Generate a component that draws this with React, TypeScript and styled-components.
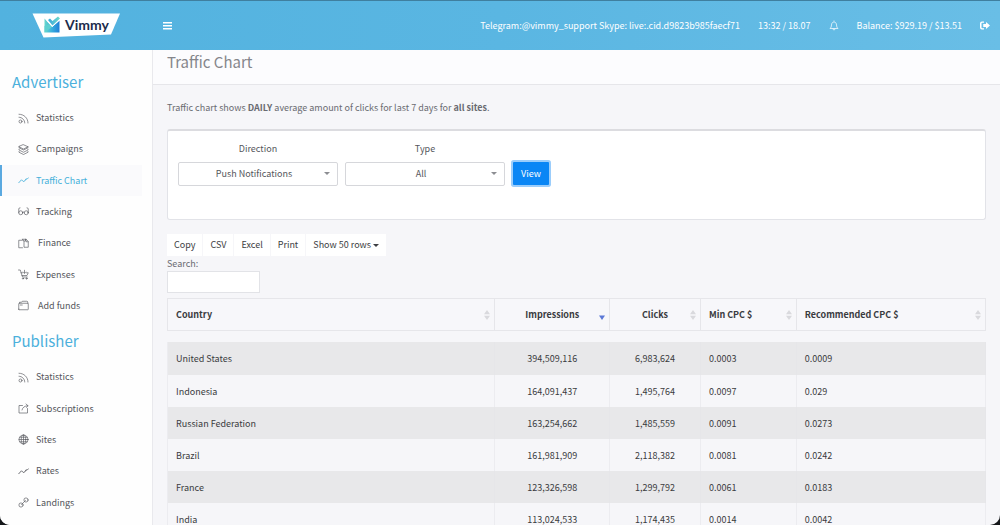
import React from "react";
import styled, { createGlobalStyle, css } from "styled-components";

const GlobalStyle = createGlobalStyle`
  *, *::before, *::after { box-sizing: border-box; }
  html { background: #15171a; }
  body {
    margin: 0;
    font-family: "Noto Sans CJK SC", "Noto Sans", sans-serif;
    font-size: 9px;
    line-height: 14px;
    color: #55565c;
  }
  button, input, select { font: inherit; color: inherit; }
`;

const Shell = styled.div`
  display: flex;
  flex-direction: column;
  height: 100vh;
  overflow: hidden;
  background: #f6f6f9;
  border-radius: 0 0 10px 10px;
`;

const TopBar = styled.header`
  display: flex;
  align-items: center;
  flex: none;
  height: 50px;
  padding: 0 10px 0 32px;
  border-top: 1px solid #3f7f9f;
  background: linear-gradient(90deg, #52b2df, #5ab6e2 50%, #69bee6);
  color: #fff;
`;

const LogoLink = styled.a`
  display: block;
  width: 89px;
  height: 26px;
`;

const IconButton = styled.button`
  display: flex;
  padding: 0;
  border: 0;
  background: none;
  color: #fff;
`;

const MenuButton = styled(IconButton)`
  margin-left: 42px;
`;

const TopInfo = styled.div`
  display: flex;
  align-items: center;
  gap: 18px;
  margin-left: auto;
`;

const Body = styled.div`
  display: flex;
  flex: 1;
  min-height: 0;
`;

const Sidebar = styled.nav`
  flex: none;
  width: 153px;
  padding-top: 20px;
  overflow: hidden;
  background: #fefefe;
  border-right: 1px solid #e9e9ed;
`;

const SectionTitle = styled.h2`
  margin: 0;
  padding-left: 12px;
  font-size: 15px;
  font-weight: 400;
  line-height: 24px;
  color: #4bb0dc;
`;

const MenuList = styled.ul<{ $height: number }>`
  display: grid;
  grid-auto-rows: 1fr;
  height: ${(p) => p.$height}px;
  margin: 8px 0;
  padding: 0;
  list-style: none;
`;

const MenuLink = styled.a<{ $active?: boolean; $wide?: boolean }>`
  display: flex;
  align-items: center;
  gap: ${(p) => (p.$wide ? 9 : 7)}px;
  height: 100%;
  margin-right: 10px;
  padding: 1px 0 0 16px;
  border-left: 2px solid transparent;
  text-decoration: none;
  color: #55565c;
  ${(p) =>
    p.$active &&
    css`
      border-left-color: #5aa9e0;
      background: #fafafc;
      color: #45b0da;
    `}
`;

const Main = styled.main`
  flex: 1;
  min-width: 0;
  overflow: hidden;
`;

const PageHead = styled.div`
  height: 35px;
  padding-left: 14px;
  border-bottom: 1px solid #e6e6ea;
  background: #fcfcfe;
`;

const PageTitle = styled.h1`
  margin: 0;
  font-size: 15px;
  font-weight: 400;
  line-height: 24px;
  color: #85868b;
`;

const Content = styled.div`
  padding: 16px 14px 0;
`;

const Intro = styled.p`
  margin: 0;
  color: #6a6b71;
`;

const FilterCard = styled.form`
  display: flex;
  align-items: flex-start;
  gap: 7px;
  height: 91px;
  margin-top: 14px;
  padding: 11px 10px;
  border: 1px solid #e2e3e8;
  border-top: 2px solid #dcdce0;
  border-radius: 3px;
  background: #fff;
`;

const Field = styled.div`
  width: 160px;
  text-align: center;
`;

const FieldLabel = styled.label`
  display: block;
  margin-bottom: 6px;
`;

const SelectBox = styled.div`
  position: relative;
  &::after {
    content: "";
    position: absolute;
    top: 10px;
    right: 8px;
    border: 3px solid transparent;
    border-top-color: #8c8d92;
    border-bottom: 0;
    pointer-events: none;
  }
`;

const Select = styled.select`
  display: block;
  width: 100%;
  height: 24px;
  padding: 0 8px 0 0;
  border: 1px solid #d6d7db;
  border-radius: 2px;
  background: #fff;
  appearance: none;
  text-align: center;
  text-align-last: center;
`;

const ViewButton = styled.button`
  height: 23px;
  margin: 20px 0 0 1px;
  padding: 0 8px;
  border: 0;
  border-radius: 1px;
  background: #0a86f5;
  box-shadow: 0 0 0 2px #9bcdfb;
  color: #fff;
`;

const Tools = styled.div`
  display: flex;
  gap: 1px;
  margin-top: 14px;
`;

const ToolButton = styled.button`
  display: flex;
  align-items: center;
  gap: 2px;
  height: 22px;
  padding: 0 7px;
  border: 0;
  background: #fff;
  color: #3d3e43;
`;

const Caret = styled.span`
  border: 3px solid transparent;
  border-top-color: currentColor;
  border-bottom: 0;
`;

const SearchLabel = styled.label`
  display: block;
  width: 93px;
  padding-top: 1px;
  color: #6a6b71;
`;

const SearchInput = styled.input`
  display: block;
  width: 100%;
  height: 22px;
  padding: 0 6px;
  border: 1px solid #e2e3e7;
  background: #fff;
`;

const Table = styled.table`
  width: 100%;
  margin-top: 5px;
  border-spacing: 0;
  table-layout: fixed;
  color: #3a3b40;
  tbody::before {
    content: "";
    display: block;
    height: 11px;
  }
`;

const HeadCell = styled.th`
  height: 33px;
  padding: 1px 4px 0 8px;
  border: 1px solid #e6e6ea;
  border-left-width: 0;
  background: #f7f7fa;
  text-align: left;
  &:first-child { border-left-width: 1px; }
`;

const HeadInner = styled.div<{ $center?: boolean }>`
  display: flex;
  align-items: center;
  justify-content: space-between;
  > span {
    flex: 1;
    padding-left: ${(p) => (p.$center ? 2 : 0)}px;
    text-align: ${(p) => (p.$center ? "center" : "left")};
  }
`;

const Row = styled.tr`
  height: 32px;
  &:first-child { height: 33px; }
  &:nth-child(odd) { background: #e8e8ea; }
`;

const Cell = styled.td<{ $center?: boolean }>`
  padding: 1px 8px 0;
  border-right: 1px solid #ececf0;
  text-align: ${(p) => (p.$center ? "center" : "left")};
  ${Row}:nth-child(odd) & { border-right-color: #e6e6e9; }
  &:first-child { border-left: 1px solid #ececf0; }
`;

const Glyph: React.FC<{ children: React.ReactNode }> = ({ children }) => (
  <svg width="11" height="11" viewBox="0 0 22 22" fill="none" stroke="currentColor" strokeWidth="1.300" strokeLinecap="round" strokeLinejoin="round" aria-hidden="true">
    {children}
  </svg>
);

const icons = {
  feed: <><circle cx="5" cy="17" r="3" /><path d="M2 8.5c6 0 11.500 5 11.500 11.500M2 2.500C12 2.500 20 10 20 20" /></>,
  layers: <><path d="M11 1.500 20 5.500v2L11 12 2 7.500v-2zM2 5.500 11 10l9-4.500M2 10.500v1.500l9 4.500 9-4.500v-1.500M2 15v1.500l9 4.500 9-4.500V15" /></>,
  line: <path d="M1.500 15.500 7 9.500l3.500 3.500 3-1L16 7.500l2 1 3-3" strokeWidth="1.700" />,
  glasses: <><circle cx="5.500" cy="13.500" r="4" /><circle cx="16.500" cy="13.500" r="4" /><path d="M9.300 12.500q1.700-1.500 3.400 0M1.500 13.500V6q0-2.500 2.500-2.500M20.500 13.500V6q0-2.500-2.500-2.500" /></>,
  files: <><path d="M9 19.500H1.500V4.500H9M9 2.500h7.500L20.500 7v11.500H12V6L9 2.500M12 6h3V2.500M16 3v4.500h4" /></>,
  cart: <><path d="M1 2h3.500L9 16h9.500M6 7.500h3M17 7.500h3.500L18 13H8M13 2.500v6M10.500 6 13 8.500 15.500 6" /><circle cx="10" cy="19" r="1.300" /><circle cx="17" cy="19" r="1.300" /></>,
  folder: <path d="M1.500 18.500V7.500q0-1 1-1h17q1 0 1 1v11q0 1-1 1h-17q-1 0-1-1zM3 6.500v-2h4l1.500-2h9q2 0 2 2v2M4.500 10h4" />,
  share: <path d="M9 5H2v15h17v-9M8 14c1-5 5-8.500 12-8.500M16 2l4 3.500L16.500 9" />,
  globe: <><circle cx="11" cy="11" r="9" /><ellipse cx="11" cy="11" rx="4.500" ry="9" /><path d="M11 2v18M2 11h18M3.500 6.500h15M3.500 15.500h15" /></>,
  link: <><circle cx="6" cy="16" r="4.200" /><circle cx="16" cy="6" r="4.200" /><path d="m7 15 8-8" /></>,
};

type Item = { label: string; icon: keyof typeof icons; active?: boolean; wide?: boolean };

const advertiser: Item[] = [
  { label: "Statistics", icon: "feed" },
  { label: "Campaigns", icon: "layers" },
  { label: "Traffic Chart", icon: "line", active: true },
  { label: "Tracking", icon: "glasses" },
  { label: "Finance", icon: "files", wide: true },
  { label: "Expenses", icon: "cart" },
  { label: "Add funds", icon: "folder", wide: true },
];

const publisher: Item[] = [
  { label: "Statistics", icon: "feed" },
  { label: "Subscriptions", icon: "share" },
  { label: "Sites", icon: "globe" },
  { label: "Rates", icon: "line" },
  { label: "Landings", icon: "link" },
];

const rows = [
  ["United States", "394,509,116", "6,983,624", "0.0003", "0.0009"],
  ["Indonesia", "164,091,437", "1,495,764", "0.0097", "0.029"],
  ["Russian Federation", "163,254,662", "1,485,559", "0.0091", "0.0273"],
  ["Brazil", "161,981,909", "2,118,382", "0.0081", "0.0242"],
  ["France", "123,326,598", "1,299,792", "0.0061", "0.0183"],
  ["India", "113,024,533", "1,174,435", "0.0014", "0.0042"],
];

const columns = [
  { label: "Country", width: "40.1%" },
  { label: "Impressions", width: "14%", center: true, sorted: true },
  { label: "Clicks", width: "11.1%", center: true },
  { label: "Min CPC $", width: "11.7%" },
  { label: "Recommended CPC $", width: "23.1%" },
];

const SortMark: React.FC<{ sorted?: boolean }> = ({ sorted }) => (
  <svg width="6" height="12" viewBox="0 0 6 12" aria-hidden="true">
    {sorted ? (
      <path d="M0 6.500h6L3 11z" fill="#5b78d6" />
    ) : (
      <path d="M0 5.200 3 1l3 4.200zM0 6.800h6L3 11z" fill="#d9d9dd" />
    )}
  </svg>
);

const Logo = () => (
  <svg width="89" height="26" viewBox="0 0 89 26" role="img" aria-label="Vimmy">
    <defs>
      <linearGradient id="mark" x1="0" y1="0" x2="1" y2="0">
        <stop offset="0" stopColor="#6ad8cb" />
        <stop offset="0.500" stopColor="#38aede" />
        <stop offset="1" stopColor="#1f7fd6" />
      </linearGradient>
      <linearGradient id="tick" x1="0" y1="0" x2="1" y2="0">
        <stop offset="0" stopColor="#3aa6dc" />
        <stop offset="1" stopColor="#6fdccb" />
      </linearGradient>
    </defs>
    <path d="M0.500 0.500H88L79 21.500 11.500 24.500z" fill="#fff" />
    <path d="M12.500 5.500 20 14l7.500-6.500v12h-15z" fill="url(#mark)" />
    <path d="M12.500 19.500V13l5-2 2.500 3z" fill="#5fd0d0" />
    <path d="M16 7 18 5.500 20.500 8 26 3.500l2 2-7.500 7z" fill="url(#tick)" />
    <path d="M15 7.500 20.200 13.600 28 6.600" fill="none" stroke="#fff" strokeWidth="1" />
    <text x="33" y="17" fontFamily="Lato, sans-serif" fontWeight="700" fontSize="14" fill="#1c2c4c">Vimmy</text>
  </svg>
);

const Menu: React.FC<{ items: Item[]; height: number }> = ({ items, height }) => (
  <MenuList $height={height}>
    {items.map((item) => (
      <li key={item.label}>
        <MenuLink href="#" $active={item.active} $wide={item.wide}>
          <Glyph>{icons[item.icon]}</Glyph>
          {item.label}
        </MenuLink>
      </li>
    ))}
  </MenuList>
);

export default function App() {
  return (
    <>
      <GlobalStyle />
      <Shell>
        <TopBar>
          <LogoLink href="#"><Logo /></LogoLink>
          <MenuButton aria-label="Toggle menu">
            <svg width="9" height="9" viewBox="0 0 9 9" fill="currentColor"><path d="M0 1h9v1.500H0zM0 4h9v1.500H0zM0 7h9v1.500H0z" /></svg>
          </MenuButton>
          <TopInfo>
            <span>Telegram:@vimmy_support Skype: live:.cid.d9823b985faecf71</span>
            <span>13:32 / 18.07</span>
            <IconButton aria-label="Notifications">
              <svg width="10" height="11" viewBox="0 0 20 22" fill="none" stroke="currentColor" strokeWidth="1.400" strokeLinejoin="round"><path d="M10 1v2M2 17q3-2 3-7c0-8 10-8 10 0q0 5 3 7zM8 17q0 3 2 3t2-3" /></svg>
            </IconButton>
            <span>Balance: $929.19 / $13.51</span>
            <IconButton aria-label="Log out">
              <svg width="10" height="9" viewBox="0 0 20 18" fill="currentColor"><path d="M8 1H4Q0 1 0 5v8q0 4 4 4h4v-2.500H4.500Q3 14.500 3 13V5q0-1.500 1.500-1.500H8zM12 2v4H6.500v6H12v4l8-7z" /></svg>
            </IconButton>
          </TopInfo>
        </TopBar>
        <Body>
          <Sidebar>
            <SectionTitle>Advertiser</SectionTitle>
            <Menu items={advertiser} height={219} />
            <SectionTitle>Publisher</SectionTitle>
            <Menu items={publisher} height={157} />
          </Sidebar>
          <Main>
            <PageHead><PageTitle>Traffic Chart</PageTitle></PageHead>
            <Content>
              <Intro>
                Traffic chart shows <b>DAILY</b> average amount of clicks for last 7 days for <b>all sites</b>.
              </Intro>
              <FilterCard onSubmit={(e) => e.preventDefault()}>
                <Field>
                  <FieldLabel htmlFor="direction">Direction</FieldLabel>
                  <SelectBox>
                    <Select id="direction"><option>Push Notifications</option></Select>
                  </SelectBox>
                </Field>
                <Field>
                  <FieldLabel htmlFor="type">Type</FieldLabel>
                  <SelectBox>
                    <Select id="type"><option>All</option></Select>
                  </SelectBox>
                </Field>
                <ViewButton>View</ViewButton>
              </FilterCard>
              <Tools>
                <ToolButton>Copy</ToolButton>
                <ToolButton>CSV</ToolButton>
                <ToolButton>Excel</ToolButton>
                <ToolButton>Print</ToolButton>
                <ToolButton>Show 50 rows<Caret /></ToolButton>
              </Tools>
              <SearchLabel>
                Search:
                <SearchInput type="search" />
              </SearchLabel>
              <Table>
                <colgroup>
                  {columns.map((c) => <col key={c.label} width={c.width} />)}
                </colgroup>
                <thead>
                  <tr>
                    {columns.map((c) => (
                      <HeadCell key={c.label} scope="col">
                        <HeadInner $center={c.center}>
                          <span>{c.label}</span>
                          <SortMark sorted={c.sorted} />
                        </HeadInner>
                      </HeadCell>
                    ))}
                  </tr>
                </thead>
                <tbody>
                  {rows.map((r) => (
                    <Row key={r[0]}>
                      {r.map((v, i) => <Cell key={i} $center={columns[i].center}>{v}</Cell>)}
                    </Row>
                  ))}
                </tbody>
              </Table>
            </Content>
          </Main>
        </Body>
      </Shell>
    </>
  );
}
